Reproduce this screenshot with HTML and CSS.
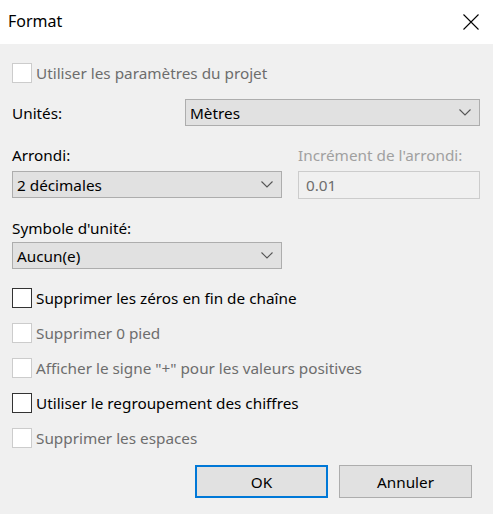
FILE: index.html
```html
<!DOCTYPE html>
<html lang="fr">
<head>
<meta charset="utf-8">
<title>Format</title>
<link rel="stylesheet" href="styles.css">
</head>
<body>
<div class="dialog">
  <div class="titlebar">
    <span class="title">Format</span>
    <svg class="close" width="16" height="16" viewBox="0 0 16 16"><path d="M0.5 0.5 L15.5 15.5 M15.5 0.5 L0.5 15.5" stroke="#000" stroke-width="1.1" fill="none"/></svg>
  </div>
  <div class="content">
    <div class="check disabled first"><span class="box"></span><span>Utiliser les paramètres du projet</span></div>

    <div class="units-row">
      <span class="label">Unités:</span>
      <div class="select wide"><span>Mètres</span><svg class="chev" width="12" height="7" viewBox="0 0 12 7"><path d="M0.5 0.5 L6 6 L11.5 0.5" stroke="#555" stroke-width="1.1" fill="none"/></svg></div>
    </div>

    <div class="round-row">
      <div class="col">
        <span class="label">Arrondi:</span>
        <div class="select"><span>2 décimales</span><svg class="chev" width="12" height="7" viewBox="0 0 12 7"><path d="M0.5 0.5 L6 6 L11.5 0.5" stroke="#555" stroke-width="1.1" fill="none"/></svg></div>
      </div>
      <div class="col">
        <span class="label light">Incrément de l'arrondi:</span>
        <div class="input"><span>0.01</span></div>
      </div>
    </div>

    <div class="col symbol">
      <span class="label">Symbole d'unité:</span>
      <div class="select narrow"><span>Aucun(e)</span><svg class="chev" width="12" height="7" viewBox="0 0 12 7"><path d="M0.5 0.5 L6 6 L11.5 0.5" stroke="#555" stroke-width="1.1" fill="none"/></svg></div>
    </div>

    <div class="checks">
      <div class="check"><span class="box"></span><span>Supprimer les zéros en fin de chaîne</span></div>
      <div class="check disabled"><span class="box"></span><span>Supprimer 0 pied</span></div>
      <div class="check disabled"><span class="box"></span><span>Afficher le signe "+" pour les valeurs positives</span></div>
      <div class="check"><span class="box"></span><span>Utiliser le regroupement des chiffres</span></div>
      <div class="check disabled"><span class="box"></span><span>Supprimer les espaces</span></div>
    </div>

    <div class="buttons">
      <div class="btn default">OK</div>
      <div class="btn">Annuler</div>
    </div>
  </div>
</div>
</body>
</html>
```

FILE: styles.css
```css
html, body {
  margin: 0;
  padding: 0;
}
body {
  width: 493px;
  height: 514px;
  background: #f0f0f0;
  font-family: "Noto Sans", "Open Sans", "Liberation Sans", sans-serif;
  font-size: 15.3px;
  color: #000;
  overflow: hidden;
}
.dialog {
  width: 493px;
  height: 514px;
  display: flex;
  flex-direction: column;
}
.titlebar {
  height: 44px;
  background: #fff;
  display: flex;
  align-items: center;
  justify-content: space-between;
  padding: 0 14px 0 8px;
  box-sizing: border-box;
}
.title {
  font-size: 16px;
  margin-top: -2px;
}
.close {
  display: block;
  margin-top: -1px;
}
.content {
  padding: 19px 13px 0 12px;
  display: flex;
  flex-direction: column;
}
.check {
  display: flex;
  align-items: center;
  height: 20px;
  gap: 4px;
  line-height: 20px;
}
.box {
  width: 18px;
  height: 18px;
  border: 1px solid #333;
  background: #fff;
  flex: none;
}
.check.disabled {
  color: #6d6d6d;
}
.check.disabled .box {
  border-color: #cccccc;
}
.units-row {
  display: flex;
  align-items: center;
  justify-content: space-between;
  margin-top: 16px;
}
.label {
  line-height: 20px;
  display: block;
}
.label.light {
  color: #a0a0a0;
}
.select {
  height: 27px;
  box-sizing: border-box;
  border: 1px solid #adadad;
  background: #e1e1e1;
  display: flex;
  align-items: center;
  justify-content: space-between;
  padding: 0 8px 0 4px;
  width: 270px;
}
.select.wide {
  width: 295px;
}
.chev {
  display: block;
}
.round-row {
  display: flex;
  gap: 16px;
  margin-top: 19px;
}
.col {
  display: flex;
  flex-direction: column;
  gap: 6px;
}
.input {
  width: 182px;
  height: 28px;
  box-sizing: border-box;
  border: 1px solid #cccccc;
  background: #f0f0f0;
  color: #6d6d6d;
  display: flex;
  align-items: center;
  padding-left: 7px;
}
.symbol {
  margin-top: 19px;
  gap: 4px;
}
.checks {
  display: flex;
  flex-direction: column;
  gap: 15px;
  margin-top: 19px;
}
.buttons {
  display: flex;
  justify-content: flex-end;
  gap: 11px;
  margin-top: 17px;
  padding-right: 8px;
}
.btn {
  width: 133px;
  height: 33px;
  box-sizing: border-box;
  border: 1px solid #adadad;
  background: #e1e1e1;
  display: flex;
  align-items: center;
  justify-content: center;
}
.btn.default {
  border: 2px solid #0078d7;
}
```
